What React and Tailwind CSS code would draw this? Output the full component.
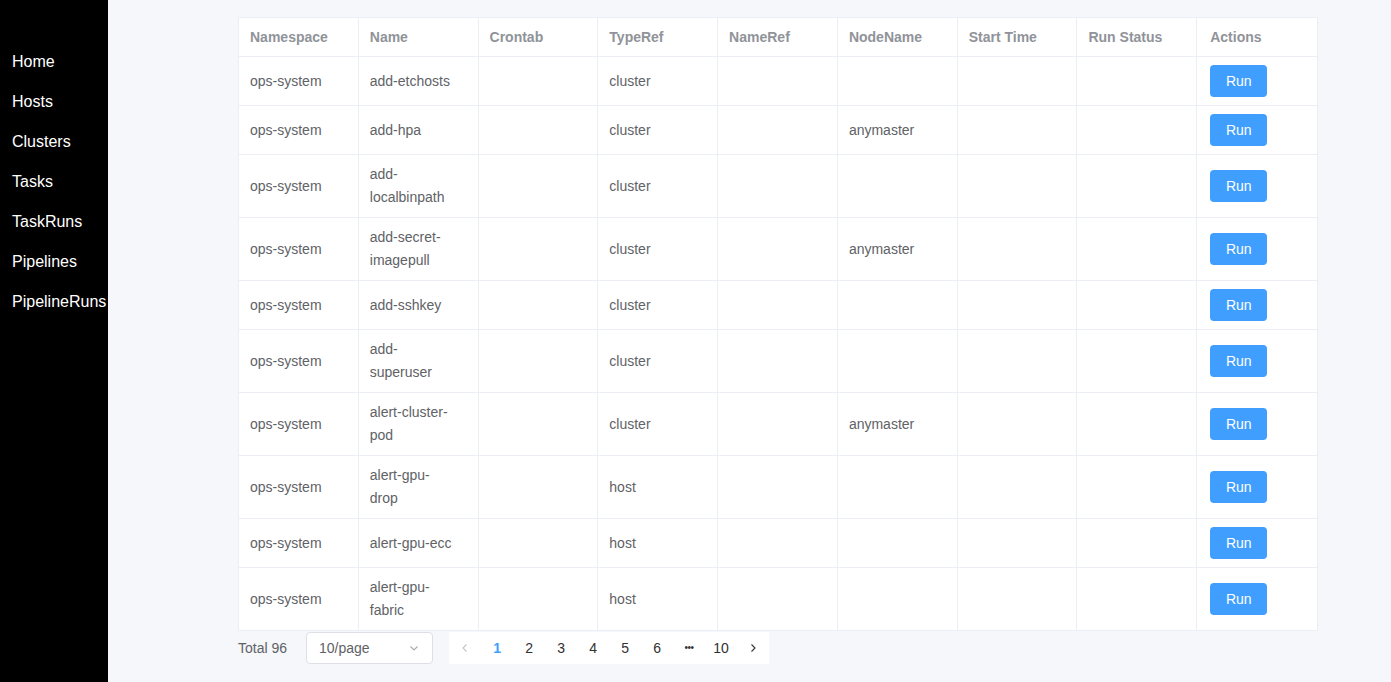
import React from 'react';

const navItems = ['Home', 'Hosts', 'Clusters', 'Tasks', 'TaskRuns', 'Pipelines', 'PipelineRuns'];

const columns = ['Namespace', 'Name', 'Crontab', 'TypeRef', 'NameRef', 'NodeName', 'Start Time', 'Run Status', 'Actions'];

const rows = [
    { name: ['add-etchosts'], type: 'cluster', node: '' },
    { name: ['add-hpa'], type: 'cluster', node: 'anymaster' },
    { name: ['add-', 'localbinpath'], type: 'cluster', node: '' },
    { name: ['add-secret-', 'imagepull'], type: 'cluster', node: 'anymaster' },
    { name: ['add-sshkey'], type: 'cluster', node: '' },
    { name: ['add-', 'superuser'], type: 'cluster', node: '' },
    { name: ['alert-cluster-', 'pod'], type: 'cluster', node: 'anymaster' },
    { name: ['alert-gpu-', 'drop'], type: 'host', node: '' },
    { name: ['alert-gpu-ecc'], type: 'host', node: '' },
    { name: ['alert-gpu-', 'fabric'], type: 'host', node: '' },
];

const Cell = ({ children, last, head }) => (
    <div className={`flex items-center ${last ? 'pl-[13px]' : 'pl-[11px] border-r border-[#ebeef5]'} pr-3 py-2 ${head ? 'leading-[22px]' : 'leading-[23px]'}`}>
        <div>{children}</div>
    </div>
);

const Chevron = ({ dir }) => (
    <svg width="12" height="12" viewBox="0 0 12 12" fill="none" stroke="currentColor" strokeWidth="1.1">
        {dir === 'left' && <path d="M7.5 2.5 4 6l3.5 3.5" />}
        {dir === 'right' && <path d="M4.5 2.5 8 6 4.5 9.5" />}
        {dir === 'down' && <path d="M2.5 4.5 6 8l3.5-3.5" />}
    </svg>
);

const App = () => {
    const pages = ['1', '2', '3', '4', '5', '6', '•••', '10'];
    return (
        <div className="flex min-h-[682px] bg-[#f5f7fa]" style={{ fontFamily: '"Liberation Sans", Arial, sans-serif' }}>
            <aside className="w-[108px] shrink-0 bg-black pt-[42px]">
                {navItems.map((item) => (
                    <div key={item} className="h-10 flex items-center pl-3 text-white text-base whitespace-nowrap">
                        {item}
                    </div>
                ))}
            </aside>

            <main className="flex-1 pl-[130px] pt-[17px]">
                <div className="w-[1080px] bg-white border border-[#ebeef5] text-sm">
                    <div className="grid grid-cols-9 border-b border-[#ebeef5] text-[#909399] font-bold">
                        {columns.map((c, i) => (
                            <Cell key={c} head last={i === columns.length - 1}>{c}</Cell>
                        ))}
                    </div>
                    {rows.map((r, idx) => (
                        <div key={idx} className={`grid grid-cols-9 text-[#606266] ${idx < rows.length - 1 ? 'border-b border-[#ebeef5]' : ''}`}>
                            <Cell>ops-system</Cell>
                            <Cell>
                                {r.name.map((n) => (
                                    <div key={n}>{n}</div>
                                ))}
                            </Cell>
                            <Cell></Cell>
                            <Cell>{r.type}</Cell>
                            <Cell></Cell>
                            <Cell>{r.node}</Cell>
                            <Cell></Cell>
                            <Cell></Cell>
                            <Cell last>
                                <button className="h-8 w-[57px] rounded bg-[#409eff] text-white text-sm font-medium">Run</button>
                            </Cell>
                        </div>
                    ))}
                </div>

                <div className="flex items-center mt-[1px] h-8 text-sm text-[#606266]">
                    <span className="mr-[19px]">Total 96</span>
                    <div className="w-[127px] h-8 flex items-center justify-between px-3 bg-white border border-[#dcdfe6] rounded text-[#606266]">
                        <span>10/page</span>
                        <span className="text-[#a8abb2]"><Chevron dir="down" /></span>
                    </div>
                    <div className="flex ml-4 bg-white">
                        <button className="w-8 h-8 flex items-center justify-center text-[#c0c4cc]"><Chevron dir="left" /></button>
                        {pages.map((p) => (
                            <button
                                key={p}
                                className={`w-8 h-8 flex items-center justify-center ${p === '1' ? 'text-[#409eff] font-bold' : 'text-[#303133]'} ${p === '•••' ? 'text-[10px] tracking-tighter' : ''}`}
                            >
                                {p}
                            </button>
                        ))}
                        <button className="w-8 h-8 flex items-center justify-center text-[#303133]"><Chevron dir="right" /></button>
                    </div>
                </div>
            </main>
        </div>
    );
};

export default App;
